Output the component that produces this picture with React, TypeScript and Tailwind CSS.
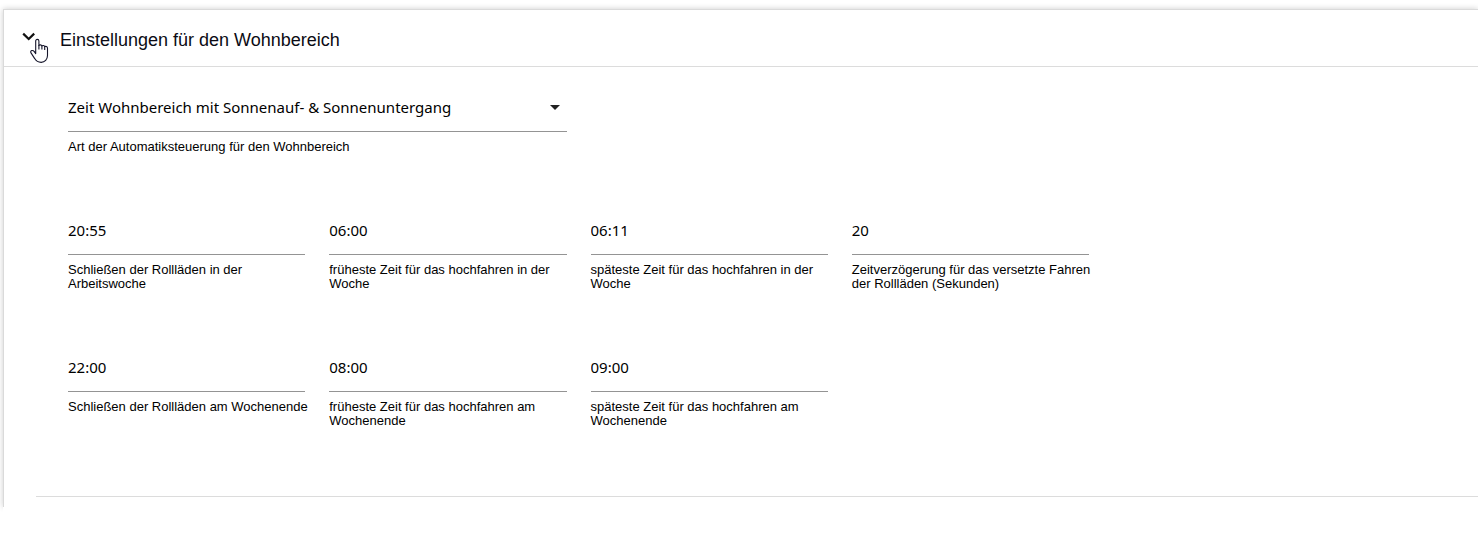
import { useState } from "react";

type Field = {
  id: string;
  value: string;
  label: string;
};

const weekFields: Field[] = [
  { id: "week-close", value: "20:55", label: "Schließen der Rollläden in der Arbeitswoche" },
  { id: "week-earliest", value: "06:00", label: "früheste Zeit für das hochfahren in der Woche" },
  { id: "week-latest", value: "06:11", label: "späteste Zeit für das hochfahren in der Woche" },
  { id: "delay", value: "20", label: "Zeitverzögerung für das versetzte Fahren der Rollläden (Sekunden)" },
];

const weekendFields: Field[] = [
  { id: "weekend-close", value: "22:00", label: "Schließen der Rollläden am Wochenende" },
  { id: "weekend-earliest", value: "08:00", label: "früheste Zeit für das hochfahren am Wochenende" },
  { id: "weekend-latest", value: "09:00", label: "späteste Zeit für das hochfahren am Wochenende" },
];

const controlClass =
  "h-12 w-full appearance-none rounded-none border-b border-[#949494] bg-transparent font-['Noto_Sans',sans-serif] text-[15px] text-black outline-none";
const labelClass = "-mr-2 block pt-2 text-[13px] leading-[14px] text-black";

const TextField = ({ id, value, label }: Field) => {
  return (
    <div className="flex flex-col">
      <input id={id} type="text" defaultValue={value} className={`${controlClass} pb-0.5`} />
      <label htmlFor={id} className={labelClass}>{label}</label>
    </div>
  );
};

const HandCursor = () => (
  <svg width="19" height="26" viewBox="0 0 19 26" className="pointer-events-none absolute left-[26px] top-[28px]" aria-hidden="true">
    <path
      d="M5.7 15.6V3C5.7 2 6.3 1.4 7.3 1.4S8.9 2 8.9 3v4.4c.4-.7 2.6-.8 3 .5.5-.7 2.5-.6 2.8.7.9-.5 2.8-.2 2.8 1.6v7.4c0 3.9-2.7 6.8-6.3 6.8-3.3 0-5.2-1.4-6.5-3.8L1 14.9c-.6-1.1-.2-2 .7-2.3.9-.3 1.8 0 2.4.8z"
      fill="#fff"
      stroke="#15152a"
      strokeWidth="1.1"
      strokeLinejoin="round"
    />
    <path d="M8.9 7v4.6M11.9 7.8v3.8M14.7 8.6v3.4" fill="none" stroke="#15152a" strokeWidth="1.1" />
  </svg>
);

const App = () => {
  const [open, setOpen] = useState(true);

  return (
    <main className="overflow-hidden bg-white pl-[3px] pt-[9px] font-['Liberation_Sans',Arial,sans-serif]">
      <section className="border-l border-t border-[#dadada] bg-white shadow-[0_0_6px_rgba(0,0,0,0.2)]">
        <header className="relative border-b border-[#dcdcdc]">
          <button
            type="button"
            aria-expanded={open}
            onClick={() => setOpen(!open)}
            className="flex h-14 w-full cursor-pointer items-center gap-6 pt-1 pl-[18px] text-left text-lg text-[#0b0b14]"
          >
            <svg width="14" height="9" viewBox="0 0 14 9" className="mb-2" aria-hidden="true">
              <path d="M1.2 1.6L6.7 7l5.5-5.4" fill="none" stroke="#111" strokeWidth="2.2" />
            </svg>
            <span>Einstellungen für den Wohnbereich</span>
          </button>
          <HandCursor />
        </header>

        {open ? (
          <div className="pb-[10px] pl-8">
            <div className="border-b border-[#dcdcdc] pb-[68px] pl-8 pt-[17px]">
              <div className="grid max-w-[1021px] grid-cols-4 gap-x-6 gap-y-[53px]">
                <div className="col-span-2 flex flex-col">
                  <div className="relative">
                    <select id="mode" className={controlClass}>
                      <option>Zeit Wohnbereich mit Sonnenauf- &amp; Sonnenuntergang</option>
                    </select>
                    <svg width="10" height="5" viewBox="0 0 10 5" className="pointer-events-none absolute right-[7px] top-[21px]" aria-hidden="true">
                      <path d="M0 0h10L5 5z" fill="#212121" />
                    </svg>
                  </div>
                  <label htmlFor="mode" className={labelClass}>Art der Automatiksteuerung für den Wohnbereich</label>
                </div>
                <div className="col-span-4 grid grid-cols-4 gap-x-6">
                  {weekFields.map((field) => <TextField key={field.id} {...field} />)}
                </div>
                <div className="col-span-4 grid grid-cols-4 gap-x-6">
                  {weekendFields.map((field) => <TextField key={field.id} {...field} />)}
                </div>
              </div>
            </div>
          </div>
        ) : null}
      </section>
      {/* covers the lower shadow so the card runs on without an edge */}
      <div className="relative h-9 bg-white" />
    </main>
  );
};

export default App;
